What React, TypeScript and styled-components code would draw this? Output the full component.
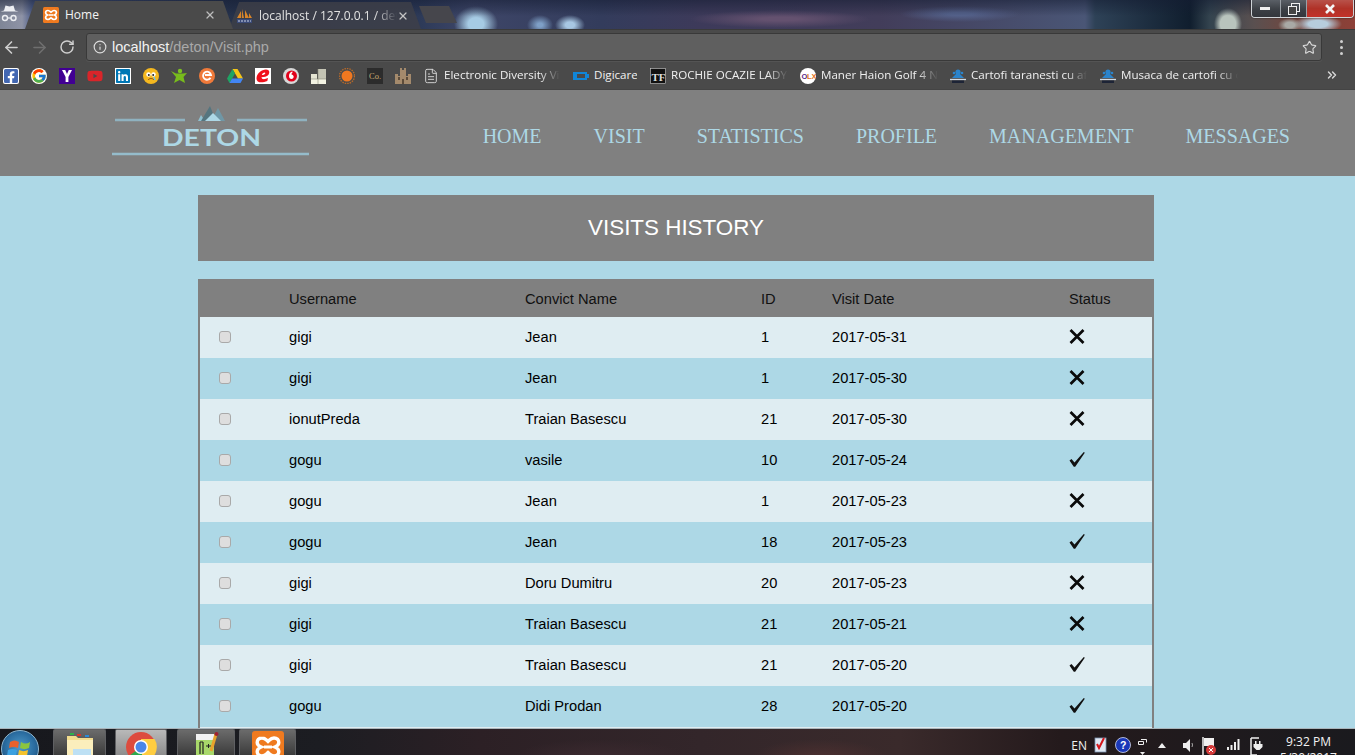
import React from "react";
import styled, { createGlobalStyle } from "styled-components";
import { ArrowLeft, ArrowRight, RotateCw, Info, Star, X as XIcon, ChevronsRight, FileText } from "lucide-react";
import { FaFacebookSquare, FaLinkedin, FaYoutube } from "react-icons/fa";
import { FcGoogle } from "react-icons/fc";

const Global = createGlobalStyle`
  html, body { margin: 0; padding: 0; height: 100%; overflow: hidden; background: #add8e6; }
  #root { height: 100%; }
  * { box-sizing: border-box; }
`;

const Screen = styled.div`
  width: 1355px; height: 755px; display: flex; flex-direction: column; overflow: hidden;
`;

const TitleBar = styled.div`
  position: relative; height: 29px; flex: none; display: flex; align-items: flex-end; overflow: hidden;
  background:
    linear-gradient(180deg, rgba(20,28,50,.55) 0, rgba(20,28,50,.25) 9px, transparent 16px),
    radial-gradient(ellipse 14px 16px at 1228px 24px, #b9c4bd 0 55%, transparent 100%),
    radial-gradient(ellipse 12px 7px at 1290px 25px, #a9a9a5 0 40%, transparent 100%),
    radial-gradient(ellipse 24px 9px at 1318px 24px, #b7cddd 0 40%, transparent 100%),
    radial-gradient(ellipse 22px 18px at 476px 24px, #a6cbe4 0 35%, transparent 100%),
    radial-gradient(ellipse 13px 10px at 540px 25px, #7e9fc6 0 20%, transparent 100%),
    radial-gradient(ellipse 15px 10px at 570px 25px, #a7c7e3 0 30%, transparent 100%),
    radial-gradient(ellipse 90px 9px at 780px 19px, #64516f 0 20%, transparent 100%),
    radial-gradient(ellipse 60px 8px at 960px 14px, #54618a 0 20%, transparent 100%),
    linear-gradient(90deg, #7f8697 0, #8e93a6 22px, #50608c 32px, #26324b 232px, #2d3a58 420px, #3e4668 470px, #333c5c 600px, #3d3a5a 700px, #423d5a 880px, #4a5676 1085px, #2e4257 1095px, #101e2e 1190px, #34444f 1210px, #5a5050 1254px, #7b4338 1310px, #8d4038 1355px);
`;

const Incognito = styled.svg`
  width: 19px; height: 19px; flex: none; position: absolute; left: 0; top: 5px;
`;

const TabStrip = styled.div`
  display: flex; align-items: flex-end; height: 29px; padding-left: 25px;
`;

const Tab = styled.div<{ $active?: boolean }>`
  height: ${p => (p.$active ? 28 : 27)}px;
  width: ${p => (p.$active ? 208 : 192)}px;
  margin-right: ${p => (p.$active ? -4 : 0)}px;
  display: flex; align-items: center;
  padding: ${p => (p.$active ? "0 17px 1px 18px" : "0 12px 0 7px")};
  background: ${p => (p.$active ? "#4a4a4a" : "rgba(62,64,72,.82)")};
  clip-path: polygon(0 100%, 10px 0, calc(100% - 10px) 0, 100% 100%);
  z-index: ${p => (p.$active ? 2 : 1)};
  flex: none;
`;

const TabTitle = styled.span<{ $fade?: boolean }>`
  flex: 1; margin-left: 6px; font: 12px/16px "Open Sans", sans-serif; color: ${p => (p.$fade ? "#e2e2e2" : "#f4f4f4")};
  white-space: nowrap; overflow: hidden;
  ${p => p.$fade && "mask-image: linear-gradient(90deg, #000 84%, transparent 100%);"}
`;

const NewTab = styled.div`
  width: 38px; height: 17px; margin: 0 0 6px -2px; background: #46464c; flex: none;
  clip-path: polygon(0 0, 30px 0, 100% 100%, 7px 100%);
`;

const WinControls = styled.div`
  position: absolute; right: 1px; top: 0; height: 18px; display: flex; border: 1px solid #cfd4d8; border-top: 0;
  border-radius: 0 0 4px 4px; overflow: hidden; box-shadow: 0 0 2px rgba(0,0,0,.7);
`;

const WinButton = styled.div<{ $w: number; $close?: boolean }>`
  width: ${p => p.$w}px; display: flex; align-items: center; justify-content: center;
  background: ${p => (p.$close ? "linear-gradient(#b8524a 0, #b03228 50%, #c2322a 100%)" : "linear-gradient(#5a5f66 0, #3c4046 55%, #33363c 100%)")};
  border-right: ${p => (p.$close ? "0" : "1px solid #9aa0a6")};
`;

const Toolbar = styled.div`
  height: 33px; flex: none; background: #4a4a4a; border-top: 1px solid #3a3a3a;
  display: flex; align-items: center; padding: 2px 0 0 0;
  color: #d6d6d6;
`;

const NavIcon = styled.div<{ $dim?: boolean }>`
  width: 28px; height: 28px; display: flex; align-items: center; justify-content: center; flex: none;
  color: ${p => (p.$dim ? "#6f6f6f" : "#cfcfcf")};
  &:first-child { margin-left: -3px; }
`;

const Omnibox = styled.div`
  width: 1236px; height: 28px; margin-left: 5px; background: #5f5f5f; border: 1px solid #393939; border-radius: 3px;
  display: flex; align-items: center; padding: 0 4px 0 6px; flex: none; box-shadow: 0 1px 0 #545454;
`;

const Url = styled.div`
  flex: 1; margin-left: 5px; font: 14.5px/18px "Liberation Sans", sans-serif; color: #a9a9a9;
  b { font-weight: 400; color: #f2f2f2; }
`;

const Kebab = styled.div`
  flex: none; margin-left: 18px; display: flex; flex-direction: column; gap: 3px;
  i { display: block; width: 3px; height: 3px; border-radius: 50%; background: #d0d0d0; }
`;

const BookmarkBar = styled.div`
  height: 28px; flex: none; background: #4a4a4a; display: flex; align-items: center; padding-left: 3px; position: relative;
  box-shadow: inset 0 -1px 0 #444;
`;

const IconOnly = styled.div`
  width: 28px; height: 24px; display: flex; align-items: center; flex: none;
  svg { display: block; }
`;

const Bookmark = styled.div<{ $w: number }>`
  display: flex; align-items: center; width: ${p => p.$w}px; flex: none; gap: 5px; overflow: hidden;
  svg { flex: none; display: block; }
`;

const BookmarkLabel = styled.span<{ $end: number; $solid?: boolean }>`
  font: 11.6px/16px "Open Sans", sans-serif; color: #f0f0f0; white-space: nowrap; overflow: hidden; flex: 1;
  margin: -1px ${p => p.$end}px 1px 0;
  ${p => !p.$solid && "mask-image: linear-gradient(90deg, #000 82%, transparent 100%);"}
`;

const More = styled.div`
  position: absolute; right: 16px; top: 6px; color: #d8d8d8; display: flex;
`;

const Main = styled.div`
  flex: 1; min-height: 0; overflow: hidden; background: #add8e6;
`;

const SiteHeader = styled.header`
  height: 86px; background: #808080; display: flex; align-items: center; justify-content: space-between;
  padding: 0 65px 0 111px;
`;

const Nav = styled.nav`
  display: flex; gap: 52px; padding-top: 6px;
`;

const NavLink = styled.a`
  font: 20px/24px "Liberation Serif", serif; color: #add8e6; text-transform: uppercase;
`;

const Content = styled.div`
  width: 956px; margin: 19px 0 0 198px;
`;

const PageTitle = styled.h1`
  margin: 0; height: 66px; background: #808080; color: #fff; text-align: center;
  font: 400 22.4px/65px "Liberation Sans", sans-serif;
`;

const Table = styled.div`
  margin-top: 18px; border: 2px solid #808080; border-top: 0; border-bottom: 0; background: #dfedf2; padding-bottom: 41px;
`;

const grid = `display: grid; grid-template-columns: 89px 236px 236px 71px 237px 1fr; align-items: center;`;

const HeadRow = styled.div`
  ${grid} height: 38px; background: #808080; margin: 0 -2px; padding: 2px 2px 0;
  font: 14.67px/18px "Liberation Sans", sans-serif; color: #111;
`;

const Row = styled.div<{ $alt: boolean }>`
  ${grid} height: 41px; padding-bottom: 2px; background: ${p => (p.$alt ? "#add8e6" : "#dfedf2")};
  font: 14.67px/18px "Liberation Sans", sans-serif; color: #000;
`;

const Box = styled.input`
  appearance: none; margin: 0 0 0 19px; width: 12px; height: 12px; background: #dedede; border: 1px solid #a9a9a9; border-radius: 3px;
  display: block;
`;

const StatusIcon = styled.svg`
  display: block; width: 16px; height: 17px;
`;

const Taskbar = styled.div`
  height: 27px; flex: none; border-top: 1px solid #a9b4ba; display: flex; position: relative; overflow: hidden;
  background:
    radial-gradient(ellipse 90px 20px at 600px 30px, #3c2a30 0, transparent 100%),
    radial-gradient(ellipse 70px 20px at 820px 30px, #4d3030 0, transparent 100%),
    linear-gradient(90deg, #17181d 0, #1c1d22 320px, #2c2025 480px, #33262a 700px, #3a2a2b 900px, #241a1c 1060px, #1a1a1e 1355px);
`;

const Orb = styled.div`
  position: absolute; left: 1px; top: 1px; width: 38px; height: 38px; border-radius: 50%;
  background: radial-gradient(circle at 50% 45%, #4f9ac9 0, #2a6ca0 55%, #173d60 100%);
  border: 1px solid #8fb8d2; overflow: hidden;
`;

const TaskButton = styled.div<{ $w: number; $gap: number; $active?: boolean }>`
  width: ${p => p.$w}px; margin-left: ${p => p.$gap}px; height: 27px; flex: none; display: flex; justify-content: center;
  padding-top: 1px;
  border: 1px solid #5f6063; border-bottom: 0; border-radius: 2px 2px 0 0;
  background: ${p => (p.$active ? "linear-gradient(#b9b9b9, #8b8b8b)" : "linear-gradient(#6b6b6b, #3a3a3a)")};
  overflow: hidden;
`;

const Tray = styled.div`
  margin-left: auto; display: flex; height: 27px; align-items: flex-start; padding-top: 8px; position: relative; flex: none;
`;

const TrayText = styled.span`
  font: 12px/16px "Open Sans", sans-serif; color: #f0f0f0; margin: 1px 0 0 0;
`;

const TraySlot = styled.div<{ $ml: number }>`
  margin-left: ${p => p.$ml}px; flex: none; display: flex; svg { display: block; }
`;

const Clock = styled.div`
  margin: -3px 25px 0 23px; width: 43px; font: 12px/16px "Open Sans", sans-serif; color: #f2f2f2; text-align: center; white-space: nowrap;
  display: flex; flex-direction: column; align-items: center;
`;

const Xampp = ({ size = 16 }: { size?: number }) => (
  <svg width={size} height={size} viewBox="0 0 16 16" style={{ flex: "none", display: "block" }}>
    <rect width="16" height="16" rx="1.5" fill="#ef7a1f" />
    <path d="M5 3.5c-1.6 0-2.4 1-2.4 2.2S3.6 7.6 4.6 8c-1 .4-2 1.1-2 2.3s.8 2.2 2.4 2.2c1.4 0 2-.8 3-1.7 1 .9 1.6 1.7 3 1.7 1.6 0 2.4-1 2.4-2.2S12.4 8.4 11.4 8c1-.4 2-1.1 2-2.3S12.6 3.5 11 3.5c-1.4 0-2 .8-3 1.7-1-.9-1.6-1.7-3-1.7z" fill="none" stroke="#fff" strokeWidth="1.7" />
    <path d="M6 8h4" stroke="#fff" strokeWidth="1.5" />
  </svg>
);

const Pma = () => (
  <svg width="17" height="16" viewBox="0 0 17 16" style={{ flex: "none" }}>
    <path d="M1 10 5 3v7zM6 1l2 9H5.800zM9 2l4 8H9zM13 5l3 5h-3z" fill="#d8852a" />
    <rect x="1" y="11" width="15" height="4" fill="#3a4a78" />
    <path d="M2 13h13" stroke="#c9d2e6" strokeWidth="1" strokeDasharray="2 1" />
  </svg>
);

const Yahoo = () => (
  <svg width="16" height="16" viewBox="0 0 16 16"><rect width="16" height="16" fill="#410093" /><path d="M3 2h3.2L8 6l1.800-4H13L9.400 9v5H6.600V9z" fill="#fff" /></svg>
);
const Emoji = () => (
  <svg width="16" height="16" viewBox="0 0 16 16"><circle cx="8" cy="8" r="8" fill="#f5b81f" /><circle cx="5.500" cy="6.500" r="2.200" fill="#fff" /><circle cx="10.500" cy="6.500" r="2.200" fill="#fff" /><circle cx="5.800" cy="7" r="1" fill="#222" /><circle cx="10.200" cy="7" r="1" fill="#222" /><path d="M5 12c1.500-2 4.500-2 6 0" fill="none" stroke="#8a4a10" strokeWidth="1" /><path d="M11 9l1 3" stroke="#6ac2ee" strokeWidth="1.400" /></svg>
);
const Green = () => (
  <svg width="16" height="16" viewBox="0 0 16 16"><circle cx="9" cy="3" r="2.200" fill="#7cc420" /><path d="M0 3l5 2.500h7L16 5l-3.500 4 1.500 6-5.500-3L3 15l2-6z" fill="#78bc1c" /></svg>
);
const CoIcon = () => (
  <svg width="16" height="16" viewBox="0 0 16 16"><circle cx="8" cy="8" r="8" fill="#f07a3a" /><path d="M11.500 9.800A4 4 0 1 1 12 7H6" fill="none" stroke="#fff" strokeWidth="1.800" /></svg>
);
const Drive = () => (
  <svg width="16" height="16" viewBox="0 0 16 16"><path d="M5.500 1h5L16 10.500h-5z" fill="#f5c518" /><path d="M5.500 1 0 10.500 2.500 15l5.500-9.500z" fill="#1fa463" /><path d="M2.500 15h11l2.500-4.500H5z" fill="#4285f4" /></svg>
);
const RedE = () => (
  <svg width="16" height="16" viewBox="0 0 16 16"><rect width="16" height="16" fill="#fff" /><path d="M1.500 10.500c0-5 5-9 9.500-9 3.500 0 4 3 2.500 5.200-1.700 1.900-4.500 2.300-7 2.500 0 2.300 3 2.600 6.500.8l-.7 3C7.500 15 1.500 15.200 1.500 10.500z" fill="#f0101a" /><path d="M6.800 7c1.500 0 3.500-.6 3.500-1.800 0-1.200-2.500-.6-3.500 1.800z" fill="#fff" /></svg>
);
const Vodafone = () => (
  <svg width="16" height="16" viewBox="0 0 16 16"><circle cx="8" cy="8" r="8" fill="#d8d8d8" /><circle cx="8.500" cy="8" r="5.500" fill="#e2001a" /><path d="M9 3.500c-2 .8-3 2.400-3 4.500 0 1.800 1 3 2.500 3 1.300 0 2.200-1 2.200-2.200 0-1.300-1.100-2-2.200-2.300 0-1.200.6-2 1.400-2.500z" fill="#fff" /></svg>
);
const Buildings = () => (
  <svg width="16" height="16" viewBox="0 0 16 16"><rect x="0" y="6" width="6" height="10" fill="#e6e6d4" /><rect x="7" y="1" width="8" height="15" fill="#c4c4b4" /><rect x="0" y="11" width="15" height="5" fill="#f2f2e2" /><path d="M7 1v15M0 11h15" stroke="#8a8a7a" strokeWidth=".6" /></svg>
);
const Sun = () => (
  <svg width="16" height="16" viewBox="0 0 16 16"><circle cx="8" cy="8" r="7.500" fill="none" stroke="#b86a2a" strokeWidth="1.400" strokeDasharray="1.500 1" /><circle cx="8" cy="8" r="5.500" fill="#f07820" /></svg>
);
const CoDark = () => (
  <svg width="16" height="16" viewBox="0 0 16 16"><rect width="16" height="16" fill="#2c2c2c" /><text x="2" y="11" fontFamily="Liberation Serif, serif" fontSize="8.500" fill="#c9ad74">Co.</text></svg>
);
const Castle = () => (
  <svg width="16" height="16" viewBox="0 0 16 16"><path d="M0 6h3v2h2V0h2v2h2V0h2v8h2V6h3v10H0z" fill="#a48a6c" /><rect x="3" y="9" width="2" height="3" fill="#5d4c3a" /><rect x="11" y="9" width="2" height="3" fill="#5d4c3a" /><rect x="7" y="11" width="2" height="5" fill="#5d4c3a" /></svg>
);
const Digicare = () => (
  <svg width="16" height="16" viewBox="0 0 16 16"><path d="M0 4h14v2h2v4h-2v2H0z" fill="#1186d8" /><rect x="4" y="6" width="8" height="4" fill="#4a4a4a" /></svg>
);
const TF = () => (
  <svg width="16" height="16" viewBox="0 0 16 16"><rect x=".5" y=".5" width="15" height="15" fill="#111" stroke="#ccc" strokeWidth=".6" /><text x="1.500" y="12.500" fontFamily="Liberation Serif, serif" fontWeight="700" fontSize="11" fill="#ddd">TF</text></svg>
);
const Olx = () => (
  <svg width="16" height="16" viewBox="0 0 16 16"><circle cx="8" cy="8" r="8" fill="#fff" /><text x="1.500" y="10.500" fontFamily="Liberation Sans, sans-serif" fontWeight="700" fontSize="7.500" fill="#5a2a8a">O</text><text x="7" y="10.500" fontFamily="Liberation Sans, sans-serif" fontWeight="700" fontSize="7.500" fill="#e8731a">LX</text></svg>
);
const Chef = () => (
  <svg width="16" height="16" viewBox="0 0 16 16"><circle cx="8" cy="4" r="2.600" fill="#2b84cc" /><circle cx="4" cy="5" r="1.300" fill="#2b84cc" /><circle cx="12" cy="5" r="1.300" fill="#2b84cc" /><path d="M2 10l4-4h4l4 4z" fill="#2b84cc" /><path d="M0 11.500h16" stroke="#cfd8e2" strokeWidth="1.300" /><rect x="2" y="12.500" width="12" height="2.500" fill="#1d2436" /></svg>
);

const Logo = () => (
  <svg width="200" height="54" viewBox="0 0 200 54" style={{ display: "block" }}>
    <path d="M4 14h70M126 14h70" stroke="#8fb2c0" strokeWidth="2.500" />
    <path d="M87 15l3-6 4 6z" fill="#8fc0d0" />
    <path d="M99 0 90 15h15z" fill="#55757f" />
    <path d="M107 2 100 15h14z" fill="#6f97a6" />
    <path d="M102 7 94 15h16z" fill="#add8e6" />
    <text x="51" y="39.500" fontFamily="Lato, sans-serif" fontWeight="700" fontSize="23.500" fill="#add8e6" textLength="99" lengthAdjust="spacingAndGlyphs">DETON</text>
    <path d="M1 48h197" stroke="#95bccb" strokeWidth="2.500" />
  </svg>
);

const Cross = () => (
  <StatusIcon viewBox="0 0 16 17"><path d="M1.500 2l13 13M14.500 2l-13 13" stroke="#0a0a0a" strokeWidth="2.700" /></StatusIcon>
);
const Check = () => (
  <StatusIcon viewBox="0 0 16 17"><path d="M.5 9.500 2.500 8l3 3.500L14.800 1l1 .8L6.200 15.800H4.800z" fill="#111" /></StatusIcon>
);

const rows: [string, string, string, string, boolean][] = [
  ["gigi", "Jean", "1", "2017-05-31", false],
  ["gigi", "Jean", "1", "2017-05-30", false],
  ["ionutPreda", "Traian Basescu", "21", "2017-05-30", false],
  ["gogu", "vasile", "10", "2017-05-24", true],
  ["gogu", "Jean", "1", "2017-05-23", false],
  ["gogu", "Jean", "18", "2017-05-23", true],
  ["gigi", "Doru Dumitru", "20", "2017-05-23", false],
  ["gigi", "Traian Basescu", "21", "2017-05-21", false],
  ["gigi", "Traian Basescu", "21", "2017-05-20", true],
  ["gogu", "Didi Prodan", "28", "2017-05-20", true],
];

const navItems = ["Home", "Visit", "Statistics", "Profile", "Management", "Messages"];

const favs = [
  <FaFacebookSquare size={16} color="#4267b2" style={{ background: "#fff", borderRadius: 2 }} />,
  <FcGoogle size={16} style={{ background: "#fff", borderRadius: "50%" }} />,
  <Yahoo />,
  <FaYoutube size={16} color="#d9252a" />,
  <FaLinkedin size={16} color="#0077b5" style={{ background: "#fff" }} />,
  <Emoji />, <Green />, <CoIcon />, <Drive />, <RedE />, <Vodafone />, <Buildings />, <Sun />, <CoDark />, <Castle />,
];

export default function App() {
  return (
    <Screen>
      <Global />
      <TitleBar>
        <Incognito viewBox="0 0 19 19">
          <path d="M4 5.500 5.500 .5l4 1 4-1 1.500 5 3.500 1H.5z" fill="#eceef2" />
          <circle cx="5" cy="13" r="2.500" fill="none" stroke="#eceef2" strokeWidth="1.400" />
          <circle cx="13.500" cy="13" r="2.500" fill="none" stroke="#eceef2" strokeWidth="1.400" />
          <path d="M7.500 13h3.500" stroke="#eceef2" strokeWidth="1.200" />
        </Incognito>
        <TabStrip>
          <Tab $active>
            <Xampp />
            <TabTitle>Home</TabTitle>
            <XIcon size={12} color="#bdbdbd" strokeWidth={2.5} />
          </Tab>
          <Tab>
            <Pma />
            <TabTitle $fade>localhost / 127.0.0.1 / deton</TabTitle>
            <XIcon size={12} color="#c4c4c4" strokeWidth={2.5} />
          </Tab>
          <NewTab />
        </TabStrip>
        <WinControls>
          <WinButton $w={29}><svg width="12" height="5" viewBox="0 0 12 5"><rect y="1" width="10" height="3" fill="#eee" /></svg></WinButton>
          <WinButton $w={26}><svg width="12" height="12" viewBox="0 0 12 12"><rect x="3.500" y=".5" width="8" height="8" fill="none" stroke="#eee" /><rect x=".5" y="3.500" width="8" height="8" fill="#444" stroke="#eee" /></svg></WinButton>
          <WinButton $w={46} $close><svg width="12" height="10" viewBox="0 0 12 10"><path d="M2 1l8 8M10 1 2 9" stroke="#f4f4f4" strokeWidth="2.600" /></svg></WinButton>
        </WinControls>
      </TitleBar>

      <Toolbar>
        <NavIcon><ArrowLeft size={19} strokeWidth={2} /></NavIcon>
        <NavIcon $dim><ArrowRight size={19} strokeWidth={2} /></NavIcon>
        <NavIcon><RotateCw size={16} strokeWidth={2.2} /></NavIcon>
        <Omnibox>
          <Info size={14} color="#dcdcdc" strokeWidth={2} />
          <Url><b>localhost</b>/deton/Visit.php</Url>
          <Star size={15} color="#d8d8d8" strokeWidth={1.8} />
        </Omnibox>
        <Kebab><i /><i /><i /></Kebab>
      </Toolbar>

      <BookmarkBar>
        {favs.map((f, i) => <IconOnly key={i}>{f}</IconOnly>)}
        <IconOnly style={{ width: 21 }}><FileText size={16} color="#d8d8d8" strokeWidth={1.4} /></IconOnly>
        <Bookmark $w={129}><BookmarkLabel $end={13}>Electronic Diversity Vis</BookmarkLabel></Bookmark>
        <Bookmark $w={77}><Digicare /><BookmarkLabel $end={13} $solid>Digicare</BookmarkLabel></Bookmark>
        <Bookmark $w={150}><TF /><BookmarkLabel $end={12}>ROCHIE OCAZIE LADY</BookmarkLabel></Bookmark>
        <Bookmark $w={150}><Olx /><BookmarkLabel $end={12}>Maner Haion Golf 4 N</BookmarkLabel></Bookmark>
        <Bookmark $w={150}><Chef /><BookmarkLabel $end={13}>Cartofi taranesti cu afu</BookmarkLabel></Bookmark>
        <Bookmark $w={150}><Chef /><BookmarkLabel $end={12}>Musaca de cartofi cu c</BookmarkLabel></Bookmark>
        <More><ChevronsRight size={14} strokeWidth={2.5} /></More>
      </BookmarkBar>

      <Main>
        <SiteHeader>
          <Logo />
          <Nav>{navItems.map(n => <NavLink key={n}>{n}</NavLink>)}</Nav>
        </SiteHeader>
        <Content>
          <PageTitle>VISITS HISTORY</PageTitle>
          <Table>
            <HeadRow>
              <span /><span>Username</span><span>Convict Name</span><span>ID</span><span>Visit Date</span><span>Status</span>
            </HeadRow>
            {rows.map((r, i) => (
              <Row key={i} $alt={i % 2 === 1}>
                <Box type="checkbox" />
                <span>{r[0]}</span><span>{r[1]}</span><span>{r[2]}</span><span>{r[3]}</span>
                {r[4] ? <Check /> : <Cross />}
              </Row>
            ))}
          </Table>
        </Content>
      </Main>

      <Taskbar>
        <Orb>
          <svg width="36" height="36" viewBox="0 0 36 36">
            <path d="M8 11c3-2 6-2 9 0l-1 6c-3-1.500-6-1.500-9 0z" fill="#e8612c" />
            <path d="M19 11c3 2 6 2 9 0l-1 6c-3 1.500-6 1.500-9 0z" fill="#8cc63f" />
            <path d="M6 19c3-1.500 6-1.500 9 0l-1 6c-3-1.500-6-1.500-9 0z" fill="#3aa0e0" />
            <path d="M17 19c3 1.500 6 1.500 9 0l-1 6c-3 1.500-6 1.500-9 0z" fill="#f5c32c" />
          </svg>
        </Orb>
        <TaskButton $w={53} $gap={53}>
          <svg width="32" height="30" viewBox="0 0 32 30"><path d="M3 5h9l2 2h15v22H3z" fill="#f2dc8e" /><path d="M3 9h26v20H3z" fill="#fbeebc" /><rect x="6" y="2" width="4" height="2" fill="#2bb24a" /><rect x="13" y="3" width="4" height="2" fill="#d9362b" /><rect x="21" y="4" width="4" height="2" fill="#2a8ad6" /><rect x="9" y="18" width="18" height="9" fill="#bde0f4" /></svg>
        </TaskButton>
        <TaskButton $w={52} $gap={9} $active>
          <svg width="32" height="32" viewBox="0 0 32 32"><circle cx="16" cy="16" r="15" fill="#dd4b3e" /><path d="M16 16 4 25a15 15 0 0 0 13 6l8-13z" fill="#2da94f" /><path d="M16 8h13.500a15 15 0 0 1-12 23z" fill="#ffcd40" /><circle cx="16" cy="16" r="7" fill="#fff" /><circle cx="16" cy="16" r="5.500" fill="#4a86e8" /></svg>
        </TaskButton>
        <TaskButton $w={58} $gap={10}>
          <svg width="32" height="30" viewBox="0 0 32 30"><rect x="6" y="3" width="18" height="27" fill="#a8d86a" /><rect x="6" y="3" width="18" height="6" fill="#f2f2f2" /><path d="M10 11v12M13 11v12M10 11h3" stroke="#222" strokeWidth="1.200" fill="none" /><path d="M16 15h5M18.500 13v4" stroke="#222" strokeWidth="1" /><path d="M26 3 21 20" stroke="#e8a32c" strokeWidth="3" /><circle cx="26.500" cy="3" r="2" fill="#a02030" /></svg>
        </TaskButton>
        <TaskButton $w={57} $gap={4}><Xampp size={32} /></TaskButton>
        <Tray>
          <TrayText>EN</TrayText>
          <TraySlot $ml={6}><svg width="16" height="18" viewBox="0 0 16 18"><rect x="2" y="1" width="11" height="14" fill="#dfe8f4" stroke="#7d93b0" strokeWidth=".8" /><path d="M4 7l2 4 5-10" fill="none" stroke="#d4161c" strokeWidth="2" /></svg></TraySlot>
          <TraySlot $ml={6}><svg width="16" height="16" viewBox="0 0 16 16"><circle cx="8" cy="8" r="7.500" fill="#1a38b8" stroke="#d5dcf4" strokeWidth=".8" /><text x="5" y="12" fontFamily="Liberation Sans, sans-serif" fontWeight="700" fontSize="10.500" fill="#fff">?</text></svg></TraySlot>
          <TraySlot $ml={6}><svg width="12" height="18" viewBox="0 0 12 18"><path d="M1.500 4.500h5v3h-5zM4 2.500h5.500v3" fill="none" stroke="#eee" strokeWidth="1" /><path d="M3 15h5l-2.500 3z" fill="#eee" /></svg></TraySlot>
          <TraySlot $ml={9}><svg width="9" height="16" viewBox="0 0 9 16"><path d="M0 11h8L4 6z" fill="#eee" /></svg></TraySlot>
          <TraySlot $ml={15}><svg width="14" height="16" viewBox="0 0 14 16"><path d="M1 6h3l4-4v13l-4-4H1z" fill="#eee" /><path d="M10 6q1 2 0 4" fill="none" stroke="#aaa" /></svg></TraySlot>
          <TraySlot $ml={6}><svg width="15" height="20" viewBox="0 0 15 20"><path d="M1 0v20" stroke="#eee" strokeWidth="1.500" /><path d="M2 1h10v8H2z" fill="#f0f0f0" /><circle cx="9" cy="13" r="5" fill="#d43a3a" /><path d="M7 11l4 4M11 11l-4 4" stroke="#fff" /></svg></TraySlot>
          <TraySlot $ml={9}><svg width="16" height="14" viewBox="0 0 16 14"><path d="M1 10h2v3H1zM4.500 8h2v5h-2zM8 5h2v8H8zM11.500 2h2v11h-2z" fill="#eee" /></svg></TraySlot>
          <TraySlot $ml={8}><svg width="14" height="18" viewBox="0 0 14 18"><path d="M1 1v17h6M1 1h8" fill="none" stroke="#eee" strokeWidth="1.500" /><path d="M5 4h1.500v3H5zM9 4h1.500v3H9zM3.500 7h9v3l-3 3H6.500l-3-3z" fill="#eee" /></svg></TraySlot>
          <Clock><span>9:32 PM</span><span>5/30/2017</span></Clock>
        </Tray>
      </Taskbar>
    </Screen>
  );
}
